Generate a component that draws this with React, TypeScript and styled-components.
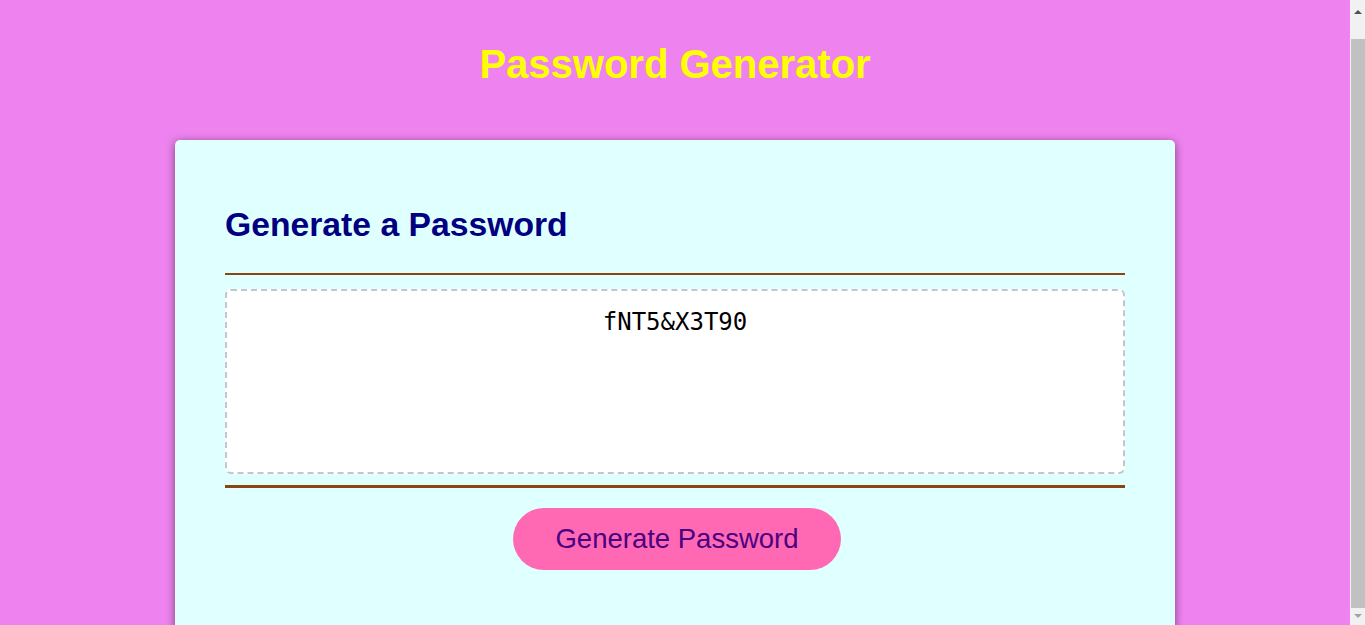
import React from "react";
import styled, { createGlobalStyle } from "styled-components";

const GlobalStyle = createGlobalStyle`
  html, body {
    margin: 0;
    padding: 0;
  }

  body {
    background: #ee82ee;
    font-family: "Liberation Sans", Arial, sans-serif;
  }
`;

const Page = styled.div`
  padding: 42px 35px 40px 20px;
`;

const Title = styled.h1`
  margin: 0 0 53px;
  color: #ffff00;
  font-size: 40px;
  font-weight: 700;
  text-align: center;
`;

const Card = styled.section`
  max-width: 900px;
  margin: 0 auto;
  padding: 65px 50px 60px;
  border-radius: 5px;
  background: #e0ffff;
  box-shadow: rgba(0, 0, 0, 0.5) 0 2px 8px 0;
`;

const CardTitle = styled.h2`
  margin: 0 0 29px;
  color: #000080;
  font-size: 33.7px;
  font-weight: 700;
`;

const Divider = styled.hr<{ $thick?: boolean }>`
  height: ${({ $thick }) => ($thick ? "3px" : "2px")};
  margin: 0;
  border: 0;
  background: #8b4513;
`;

const CardBody = styled.div`
  display: flex;
  padding: 14px 0 11px;
`;

const Output = styled.textarea`
  box-sizing: border-box;
  width: 100%;
  height: 185px;
  padding: 17px 15px 0;
  border: 2px dashed #c0c7cf;
  border-radius: 6px;
  background: #fff;
  color: #000;
  font-family: "DejaVu Sans Mono", monospace;
  font-size: 24px;
  text-align: center;
  resize: none;
  outline: none;
`;

const Footer = styled.div`
  display: flex;
  justify-content: center;
  padding-top: 20px;
`;

const GenerateButton = styled.button`
  margin-left: 4px;
  padding: 15px 42px;
  border: 0;
  border-radius: 32px;
  background: #ff69b4;
  color: #4b0082;
  font-family: "Liberation Sans", Arial, sans-serif;
  font-size: 27.5px;
  line-height: 32px;
  cursor: pointer;
`;

// browser scrollbar as it appears in the capture
const ScrollTrack = styled.div`
  position: fixed;
  top: 0;
  right: 0;
  display: flex;
  width: 15px;
  height: 100vh;
  flex-direction: column;
  align-items: stretch;
  background: #f1f1f1;
`;

const ScrollArrow = styled.div<{ $dir: "up" | "down" }>`
  display: flex;
  height: 17px;
  flex: 0 0 auto;
  align-items: center;
  justify-content: center;

  &::before {
    content: "";
    width: 0;
    height: 0;
    border-right: 4px solid transparent;
    border-left: 4px solid transparent;
    ${({ $dir }) =>
      $dir === "up"
        ? "border-bottom: 4px solid #505050; margin-top: 6px;"
        : "border-top: 4px solid #a3a3a3; margin-bottom: 2px;"}
  }
`;

const ScrollThumb = styled.div`
  flex: 1;
  margin: 22px 0 0 1px;
  background: #c1c1c1;
`;

export default function App() {
  return (
    <>
      <GlobalStyle />
      <Page>
        <Title>Password Generator</Title>
        <Card>
          <CardTitle>Generate a Password</CardTitle>
          <Divider />
          <CardBody>
            <Output readOnly value="fNT5&X3T90" aria-label="Generated Password" />
          </CardBody>
          <Divider $thick />
          <Footer>
            <GenerateButton type="button">Generate Password</GenerateButton>
          </Footer>
        </Card>
      </Page>
      <ScrollTrack aria-hidden="true">
        <ScrollArrow $dir="up" />
        <ScrollThumb />
        <ScrollArrow $dir="down" />
      </ScrollTrack>
    </>
  );
}
